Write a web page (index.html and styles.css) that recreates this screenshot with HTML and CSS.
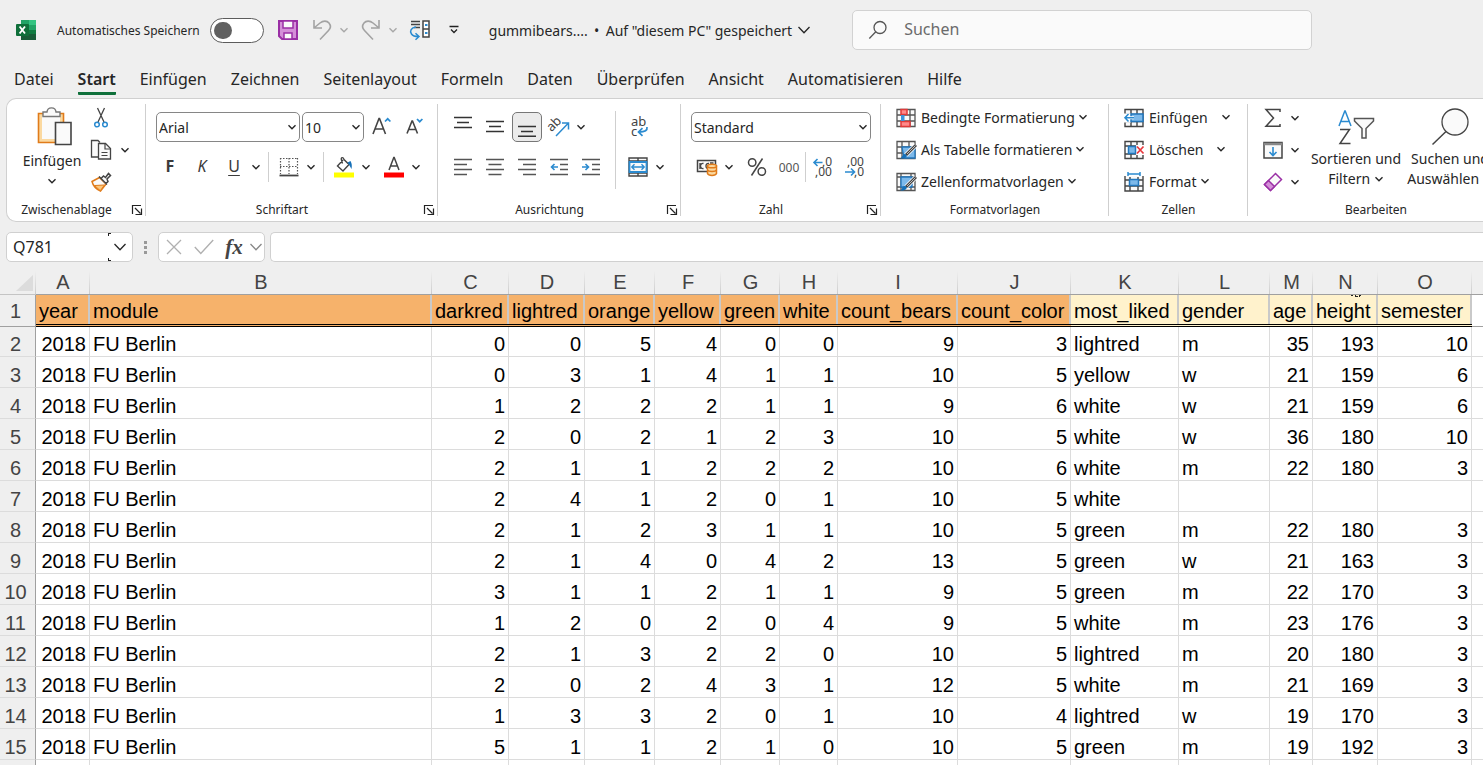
FILE: index.html
```html
<!DOCTYPE html>
<html lang="de">
<head>
<meta charset="utf-8">
<title>gummibears - Excel</title>
<link rel="stylesheet" href="styles.css">
</head>
<body>
<svg class="defs" aria-hidden="true">
  <symbol id="chev" viewBox="0 0 10 10"><path d="M1.500 3.200 5 6.700 8.500 3.200" fill="none" stroke="currentColor" stroke-width="1.400"/></symbol>
  <symbol id="chev-big" viewBox="0 0 14 14"><path d="M1.500 4 7 9.800 12.500 4" fill="none" stroke="currentColor" stroke-width="1.300"/></symbol>
  <symbol id="launcher" viewBox="0 0 12 12"><path d="M1.500 10V1.500H10M4 4l5.500 5.500M10.500 4.500v6h-6" fill="none" stroke="#222" stroke-width="1.200"/></symbol>
</svg>

<header class="titlebar">
  <svg class="logo" width="20" height="20" viewBox="0 0 20 20"><path d="M5 0h15v20H5z" fill="#21a366"/><path d="M13 0h7v5h-7z" fill="#33c481"/><path d="M5 5h8v5H5z" fill="#107c41"/><path d="M13 10h7v5h-7z" fill="#107c41"/><path d="M5 14h15v6H5z" fill="#185c37"/><rect y="4" width="13" height="12" rx="1" fill="#0f6f3a"/><path d="m3.600 6.500 5.400 7M9 6.500l-5.400 7" stroke="#fff" stroke-width="1.900"/></svg>
  <label class="autosave" for="autosave">Automatisches Speichern</label>
  <input type="checkbox" class="toggle" id="autosave">
  <div class="quick">
    <button class="q-save" aria-label="Speichern"><svg width="20" height="20" viewBox="0 0 20 20"><path d="M1 1h18v18H4l-3-3z" fill="#d48fd8" stroke="#9a2fa5" stroke-width="2"/><path d="M5 1h10v7H5z" fill="#fafafa" stroke="#9a2fa5" stroke-width="1.500"/><path d="M6 19v-6h8v6z" fill="#fafafa" stroke="#9a2fa5" stroke-width="1.500"/></svg></button>
    <button class="q-undo" aria-label="Rückgängig"><svg width="20" height="22" viewBox="0 0 20 22"><path d="M2 1v8h8M2 9l6-5c3-2.500 7-2.500 9 0 2 2.500 1.500 5.500-.5 7.500L8 20.500" fill="none" stroke="#a3a3a3" stroke-width="1.600"/></svg></button>
    <button class="q-chev" aria-label="Rückgängig-Liste"><svg width="10" height="10"><use href="#chev"/></svg></button>
    <button class="q-undo" aria-label="Wiederholen"><svg width="20" height="22" viewBox="0 0 20 22"><path d="M18 1v8h-8M18 9l-6-5C9 1.500 5 1.500 3 4c-2 2.500-1.500 5.500.5 7.500l8.500 9" fill="none" stroke="#a3a3a3" stroke-width="1.600"/></svg></button>
    <button class="q-chev" aria-label="Wiederholen-Liste"><svg width="10" height="10"><use href="#chev"/></svg></button>
    <button class="q-touch" aria-label="Sortieren"><svg width="22" height="20" viewBox="0 0 22 20"><path d="M2 1.500h9M2 4.500h9M5 7.500h6" stroke="#444" stroke-width="1.400"/><path d="M7 7C2 7.500.5 11 2.500 14c1.200 1.800 3.500 2.500 7 2.500M6.500 13.200l3.500 3.300-3.500 3.200" fill="none" stroke="#2b8bd0" stroke-width="1.500"/><path d="M14 1h6v16h-6zM14 9h6" fill="#fff" stroke="#444" stroke-width="1.500"/><path d="M16 5h2.500M16 13h2.500" stroke="#2b8bd0" stroke-width="1.800"/></svg></button>
    <button class="q-more" aria-label="Symbolleiste anpassen"><svg width="10" height="10" viewBox="0 0 10 10"><path d="M.5 1.500h9M2 4.500l3 3 3-3" fill="none" stroke="#222" stroke-width="1.300"/></svg></button>
  </div>
  <button class="doc-name"><span>gummibears....</span><span class="dot">•</span><span>Auf "diesem PC" gespeichert</span><svg width="14" height="14"><use href="#chev-big"/></svg></button>
  <div class="search">
    <svg width="20" height="20" viewBox="0 0 20 20"><circle cx="12" cy="7.500" r="6" fill="none" stroke="#555" stroke-width="1.300"/><path d="m7.800 11.800-6.500 6.700" stroke="#555" stroke-width="1.300"/></svg>
    <input type="text" placeholder="Suchen" aria-label="Suchen">
  </div>
</header>

<nav class="tabs">
  <a href="#">Datei</a><a href="#" class="active">Start</a><a href="#">Einfügen</a><a href="#">Zeichnen</a><a href="#">Seitenlayout</a><a href="#">Formeln</a><a href="#">Daten</a><a href="#">Überprüfen</a><a href="#">Ansicht</a><a href="#">Automatisieren</a><a href="#">Hilfe</a>
</nav>

<section class="ribbon">
  <div class="group g-clip">
    <div class="body">
      <button class="big paste"><svg width="42" height="40" viewBox="-6 0 42 40"><path d="M1.500 6.500h25v29h-25z" fill="#fbd9a0" stroke="#e07b1a" stroke-width="1.600"/><path d="M5 9h18v23H5z" fill="#fafafa"/><path d="M6 9.500V5h4c.5-5.500 8.500-5.500 9 0h4v4.500z" fill="#fafafa" stroke="#777" stroke-width="1.400"/><path d="M18.500 15.500h15.500v22H18.500z" fill="#fafafa" stroke="#444" stroke-width="1.600"/></svg><span>Einfügen</span><svg width="10" height="10"><use href="#chev"/></svg></button>
      <div class="stack">
        <div class="line"><button class="ic" aria-label="Ausschneiden"><svg width="16" height="22" viewBox="0 0 16 22"><path d="m4.500 1 6.500 14M11.500 1 5 15" stroke="#444" stroke-width="1.300"/><circle cx="4" cy="17.500" r="2.300" fill="none" stroke="#2b8bd0" stroke-width="1.500"/><circle cx="12" cy="17.500" r="2.300" fill="none" stroke="#2b8bd0" stroke-width="1.500"/></svg></button></div>
        <div class="line"><button class="ic" aria-label="Kopieren"><svg width="22" height="22" viewBox="0 0 22 22"><path d="M8 18H1.500V1.500H8l2 2" fill="#fafafa" stroke="#444" stroke-width="1.300"/><path d="M8.500 4.500h7l5 5v10.500h-12z" fill="#fafafa" stroke="#444" stroke-width="1.300"/><path d="M15 4.500V10h5.500M11.500 13.500h6M11.500 16.500h6" fill="none" stroke="#444" stroke-width="1.200"/></svg></button><button class="ch" aria-label="Kopieroptionen"><svg width="10" height="10"><use href="#chev"/></svg></button></div>
        <div class="line"><button class="ic" aria-label="Format übertragen"><svg width="20" height="20" viewBox="0 0 20 20"><path d="M1 9.500 8.500 5.500l6.500 6.500-5.500 7C5 17 2 13.500 1 9.500z" fill="#fafafa" stroke="#e07b1a" stroke-width="1.500"/><path d="m3.500 13.500 10-.5-4.200 5.700z" fill="#fbc77c" stroke="#e07b1a"/><path d="m8 4.500 8 8M10 6.500l2.500-2.500 2 1.500 3-4 2 2-3.500 3.500 1 2.500-2.500 2.500" fill="#fafafa" stroke="#444" stroke-width="1.500"/></svg></button></div>
      </div>
    </div>
    <div class="foot"><span>Zwischenablage</span><button class="launch" aria-label="Zwischenablage öffnen"><svg width="12" height="12"><use href="#launcher"/></svg></button></div>
  </div>

  <div class="group g-font">
    <div class="body rows">
      <div class="row">
        <div class="combo w-name"><select aria-label="Schriftart"><option>Arial</option></select><svg width="10" height="10"><use href="#chev"/></svg></div>
        <div class="combo w-size"><select aria-label="Schriftgrad"><option>10</option></select><svg width="10" height="10"><use href="#chev"/></svg></div>
        <button class="ic" aria-label="Schriftgrad vergrößern"><svg width="20" height="20" viewBox="0 0 20 20"><path d="M1 17 7 1.500h.5L13.500 17M3.200 12h8" fill="none" stroke="#444" stroke-width="1.600"/><path d="m13 4.500 2.700-2.700 2.700 2.700" fill="none" stroke="#2b8bd0" stroke-width="1.700"/></svg></button>
        <button class="ic" aria-label="Schriftgrad verkleinern"><svg width="20" height="20" viewBox="0 0 20 20"><path d="M3 16.500 8 4h.5l5 12.500M5 12.500h6.500" fill="none" stroke="#444" stroke-width="1.600"/><path d="m13 2 2.700 2.700L18.400 2" fill="none" stroke="#2b8bd0" stroke-width="1.700"/></svg></button>
      </div>
      <div class="row tools">
        <button class="ic bold">F</button><button class="ic italic">K</button><button class="ic under">U</button><button class="ch" aria-label="Unterstreichung"><svg width="10" height="10"><use href="#chev"/></svg></button>
        <i class="vr"></i>
        <button class="ic" aria-label="Rahmen"><svg width="20" height="20" viewBox="0 0 20 20"><path d="M1.500 1v16M18.500 1v16M10 1v16M1 1.500h18M1 9.500h18" fill="none" stroke="#555" stroke-width="1.200" stroke-dasharray="1.500 1.500"/><path d="M.5 18.500h19" stroke="#444" stroke-width="1.800"/></svg></button><button class="ch" aria-label="Rahmenoptionen"><svg width="10" height="10"><use href="#chev"/></svg></button>
        <i class="vr"></i>
        <button class="ic" aria-label="Füllfarbe"><svg width="20" height="22" viewBox="0 0 20 22"><path d="m9 4-5.500 6 5.500 5 6-6.500L10 3.500c-1-3-3.500-2-2.500.5l1 3.500" fill="none" stroke="#444" stroke-width="1.400"/><path d="m13.500 6.500 3-1.500c1.500 2.500 1.500 5 1 8-1-1.500-1.500-3-4-6.500z" fill="#1570b8"/><path d="M0 16.500h20v5H0z" fill="#ff0"/></svg></button><button class="ch" aria-label="Füllfarben"><svg width="10" height="10"><use href="#chev"/></svg></button>
        <button class="ic" aria-label="Schriftfarbe"><svg width="20" height="22" viewBox="0 0 20 22"><path d="m5 14 4.800-12.500h.4L15 14M6.800 10h6.500" fill="none" stroke="#444" stroke-width="1.500"/><path d="M0 16.500h20v5H0z" fill="#f00"/></svg></button><button class="ch" aria-label="Schriftfarben"><svg width="10" height="10"><use href="#chev"/></svg></button>
      </div>
    </div>
    <div class="foot"><span>Schriftart</span><button class="launch" aria-label="Schriftart öffnen"><svg width="12" height="12"><use href="#launcher"/></svg></button></div>
  </div>

  <div class="group g-align">
    <div class="body">
      <div class="rows">
        <div class="row">
          <button class="ic" aria-label="Oben"><svg width="18" height="20" viewBox="0 0 18 20"><path d="M0 .5h18M3 5.500h12M0 10.500h18" stroke="#333" stroke-width="1.400"/></svg></button>
          <button class="ic" aria-label="Mitte"><svg width="18" height="20" viewBox="0 0 18 20"><path d="M0 4.500h18M3 9.500h12M0 14.500h18" stroke="#333" stroke-width="1.400"/></svg></button>
          <button class="ic on" aria-label="Unten"><svg width="18" height="20" viewBox="0 0 18 20"><path d="M0 9.500h18M3 14.500h12M0 19.300h18" stroke="#333" stroke-width="1.400"/></svg></button>
          <button class="ic" aria-label="Ausrichtung"><svg width="22" height="20" viewBox="0 0 22 20"><g transform="rotate(-45 7 9)"><text x="0" y="11" class="ab">ab</text></g><path d="M8 19 20 6.500M14 6h6.500v6.500" fill="none" stroke="#2b8bd0" stroke-width="1.500"/></svg></button>
          <button class="ch" aria-label="Ausrichtungsoptionen"><svg width="10" height="10"><use href="#chev"/></svg></button>
        </div>
        <div class="row">
          <button class="ic" aria-label="Linksbündig"><svg width="18" height="18" viewBox="0 0 18 18"><path d="M0 1.500h18M0 6.500h13M0 11.500h18M0 16.500h13" stroke="#555" stroke-width="1.500"/></svg></button>
          <button class="ic" aria-label="Zentriert"><svg width="18" height="18" viewBox="0 0 18 18"><path d="M0 1.500h18M2.500 6.500h13M0 11.500h18M2.500 16.500h13" stroke="#555" stroke-width="1.500"/></svg></button>
          <button class="ic" aria-label="Rechtsbündig"><svg width="18" height="18" viewBox="0 0 18 18"><path d="M0 1.500h18M5 6.500h13M0 11.500h18M5 16.500h13" stroke="#555" stroke-width="1.500"/></svg></button>
          <button class="ic" aria-label="Einzug verkleinern"><svg width="18" height="18" viewBox="0 0 18 18"><path d="M0 1.500h18M10 6.500h8M10 11.500h8M0 16.500h18" stroke="#555" stroke-width="1.500"/><path d="M8 9H1.500M4.500 6l-3 3 3 3" fill="none" stroke="#2b8bd0" stroke-width="1.600"/></svg></button>
          <button class="ic" aria-label="Einzug vergrößern"><svg width="18" height="18" viewBox="0 0 18 18"><path d="M0 1.500h18M10 6.500h8M10 11.500h8M0 16.500h18" stroke="#555" stroke-width="1.500"/><path d="M0 9h6.500M3.500 6l3 3-3 3" fill="none" stroke="#2b8bd0" stroke-width="1.600"/></svg></button>
        </div>
      </div>
      <i class="vr tall"></i>
      <div class="rows">
        <div class="row"><button class="ic" aria-label="Textumbruch"><svg width="20" height="22" viewBox="0 0 20 22"><text x="3" y="10" class="ab">ab</text><text x="3" y="20" class="ab">c</text><path d="M19 11c.5 3.500-1.500 5-8.500 5M14.500 12.200 10.500 16l4 3.800" fill="none" stroke="#2b8bd0" stroke-width="1.700"/></svg></button></div>
        <div class="row"><button class="ic" aria-label="Verbinden und zentrieren"><svg width="20" height="20" viewBox="0 0 20 20"><path d="M1 1h18v18H1zM10 1v18M1 4h18M1 16h18" fill="#fafafa" stroke="#444" stroke-width="1.400"/><path d="M1.500 5h17v10h-17z" fill="#fafafa" stroke="#2b8bd0" stroke-width="1.800"/><path d="M4 10h12M6.500 7.200 3.800 10l2.700 2.800M13.500 7.200l2.700 2.800-2.700 2.800" fill="none" stroke="#2b8bd0" stroke-width="1.400"/></svg></button><button class="ch" aria-label="Verbindungsoptionen"><svg width="10" height="10"><use href="#chev"/></svg></button></div>
      </div>
    </div>
    <div class="foot"><span>Ausrichtung</span><button class="launch" aria-label="Ausrichtung öffnen"><svg width="12" height="12"><use href="#launcher"/></svg></button></div>
  </div>

  <div class="group g-num">
    <div class="body rows">
      <div class="row"><div class="combo w-fmt"><select aria-label="Zahlenformat"><option>Standard</option></select><svg width="10" height="10"><use href="#chev"/></svg></div></div>
      <div class="row">
        <button class="ic" aria-label="Buchhaltungsformat"><svg width="22" height="18" viewBox="0 0 22 18"><path d="M1.500 2.500h18v11h-18z" fill="#fafafa" stroke="#444" stroke-width="1.500"/><path d="M7.500 5.500c-4-1-4 6 0 5M13 5.500c-4-1-4 6 0 5M14 5h3.500M4 5v6" fill="none" stroke="#444" stroke-width="1.400"/><path d="M11.500 8v7.500c1 2.500 8 2.500 9 0V8z" fill="#fbd9a0" stroke="#e07b1a" stroke-width="1.500"/><ellipse cx="16" cy="8" rx="4.500" ry="1.800" fill="#fbd9a0" stroke="#e07b1a" stroke-width="1.500"/><path d="M11.500 12c1 2 8 2 9 0" fill="none" stroke="#e07b1a" stroke-width="1.500"/></svg></button><button class="ch" aria-label="Währungen"><svg width="10" height="10"><use href="#chev"/></svg></button>
        <button class="ic pct" aria-label="Prozent"><svg width="20" height="20" viewBox="0 0 20 20"><g fill="none" stroke="#444" stroke-width="1.500"><circle cx="5.200" cy="5.500" r="3.700"/><circle cx="14.800" cy="14.500" r="3.700"/><path d="M15.500 1.500 4.500 18.500"/></g></svg></button>
        <button class="ic thousand">000</button>
        <i class="vr"></i>
        <button class="ic" aria-label="Dezimalstelle hinzufügen"><svg width="20" height="22" viewBox="0 0 20 22"><text x="9" y="10" class="dec">,0</text><text x="2" y="20" class="dec">,00</text><path d="M9.500 6.500H1M4.500 3 1 6.500 4.500 10" fill="none" stroke="#2b8bd0" stroke-width="1.600"/></svg></button>
        <button class="ic" aria-label="Dezimalstelle entfernen"><svg width="20" height="22" viewBox="0 0 20 22"><text x="2" y="10" class="dec">,00</text><text x="9" y="20" class="dec">,0</text><path d="M0 16h9.500M6 12.500 9.500 16 6 19.500" fill="none" stroke="#2b8bd0" stroke-width="1.600"/></svg></button>
      </div>
    </div>
    <div class="foot"><span>Zahl</span><button class="launch" aria-label="Zahl öffnen"><svg width="12" height="12"><use href="#launcher"/></svg></button></div>
  </div>

  <div class="group g-styles">
    <div class="body list">
      <button class="item"><svg width="20" height="20" viewBox="0 0 20 20"><path d="M1 1.500h18v17H1zM6 1.500v17M14 1.500v17M1 7h18M1 13h18" fill="#fafafa" stroke="#555" stroke-width="1.300"/><path d="M5 1.500h6v5H5zM5 13.500h9v5H5z" fill="#ff8a8a" stroke="#e03a3a" stroke-width="1.500"/><path d="M5 7h3.500v6H5z" fill="#3b95dc"/></svg><span>Bedingte Formatierung</span><svg width="10" height="10"><use href="#chev"/></svg></button>
      <button class="item"><svg width="20" height="20" viewBox="0 0 20 20"><path d="M1 1.500h18v17H1zM6 1.500v17M13 1.500v17M1 7h18M1 13h18" fill="#fafafa" stroke="#555" stroke-width="1.300"/><path d="M6 7h13v11H8z" fill="#7db9ea" stroke="#2277bd" stroke-width="1.300"/><path d="M20 5 10 15" stroke="#fff" stroke-width="4.500"/><path d="M20 5 10 15" stroke="#444" stroke-width="2.800"/><path d="M19.500 5.500 11 14" stroke="#ddd" stroke-width=".8"/><path d="M4 18.500c2 0 2-4.500 5-4.500 3.500 1.500 1.500 5-5 4.500z" fill="#1570b8"/></svg><span>Als Tabelle formatieren</span><svg width="10" height="10"><use href="#chev"/></svg></button>
      <button class="item"><svg width="20" height="20" viewBox="0 0 20 20"><path d="M1 1.500h18v17H1zM5 1.500v17M15 1.500v17M1 5h18M1 15h18" fill="#fafafa" stroke="#555" stroke-width="1.300"/><path d="M5 5h11v10H5z" fill="#7db9ea" stroke="#2277bd" stroke-width="1.300"/><path d="M20 5 10 15" stroke="#fff" stroke-width="4.500"/><path d="M20 5 10 15" stroke="#444" stroke-width="2.800"/><path d="M19.500 5.500 11 14" stroke="#ddd" stroke-width=".8"/><path d="M4 18.500c2 0 2-4.500 5-4.500 3.500 1.500 1.500 5-5 4.500z" fill="#1570b8"/></svg><span>Zellenformatvorlagen</span><svg width="10" height="10"><use href="#chev"/></svg></button>
    </div>
    <div class="foot"><span>Formatvorlagen</span></div>
  </div>

  <div class="group g-cells">
    <div class="body list">
      <button class="item"><svg width="20" height="20" viewBox="0 0 20 20"><path d="M1 1.500h18v17H1zM7 1.500v17M13 1.500v17M1 6.500h18M1 13.500h18" fill="#fafafa" stroke="#444" stroke-width="1.400"/><path d="M0 5.500h7v9H0z" fill="#fff"/><path d="M7 6h12v7.500H7z" fill="#7db9ea" stroke="#2277bd" stroke-width="1.500"/><path d="M10 9.800H1M4.500 6 1 9.800l3.500 3.700" fill="none" stroke="#fff" stroke-width="3"/><path d="M10 9.800H1M4.500 6 1 9.800l3.500 3.700" fill="none" stroke="#2b8bd0" stroke-width="1.600"/></svg><span class="w-cmd">Einfügen</span><svg width="10" height="10"><use href="#chev"/></svg></button>
      <button class="item"><svg width="20" height="20" viewBox="0 0 20 20"><path d="M1 1.500h18V6H1zM1 14h18v4.500H1zM7 1v5M13 1v5M7 14v5M13 14v5M1 6v8" fill="#fafafa" stroke="#444" stroke-width="1.400"/><path d="M12 5h8v10h-8z" fill="#fff"/><path d="M4.500 6.500h7v7h-7z" fill="#7db9ea" stroke="#2277bd" stroke-width="1.500"/><path d="m13 6.500 6.500 7M19.500 6.500l-6.500 7" stroke="#e8383d" stroke-width="1.700"/></svg><span class="w-del">Löschen</span><svg width="10" height="10"><use href="#chev"/></svg></button>
      <button class="item"><svg width="20" height="20" viewBox="0 0 20 20"><path d="M1 4v15h18V4M6 5v14M14 5v14M1 8h18M1 14h18" fill="#fafafa" stroke="#444" stroke-width="1.400"/><path d="M5.500 7.500h9v6h-9z" fill="#7db9ea" stroke="#2277bd" stroke-width="1.500"/><path d="M4 0v4M16 0v4M4 2h12" stroke="#2b8bd0" stroke-width="1.500"/></svg><span>Format</span><svg width="10" height="10"><use href="#chev"/></svg></button>
    </div>
    <div class="foot"><span>Zellen</span></div>
  </div>

  <div class="group g-edit">
    <div class="body">
      <div class="stack">
        <div class="line"><button class="ic" aria-label="AutoSumme"><svg width="18" height="20" viewBox="0 0 18 20"><path d="M16 4V1.500H2L9.500 10 2 18.300h14V16" fill="none" stroke="#444" stroke-width="1.500"/></svg></button><button class="ch" aria-label="Summenoptionen"><svg width="10" height="10"><use href="#chev"/></svg></button></div>
        <div class="line"><button class="ic" aria-label="Ausfüllen"><svg width="20" height="18" viewBox="0 0 20 18"><path d="M1 1.500h18v15.500H1z" fill="#fafafa" stroke="#444" stroke-width="1.500"/><path d="M1 3h18" stroke="#888" stroke-width="2.500"/><path d="M10 6v8.500M6.500 11l3.500 3.500 3.500-3.500" fill="none" stroke="#2b8bd0" stroke-width="1.600"/></svg></button><button class="ch" aria-label="Ausfülloptionen"><svg width="10" height="10"><use href="#chev"/></svg></button></div>
        <div class="line"><button class="ic" aria-label="Löschen"><svg width="20" height="20" viewBox="0 0 20 20"><path d="m1.500 12.500 11-11 6 6-11 11z" fill="#fafafa" stroke="#9a2fa5" stroke-width="1.500"/><path d="M1.500 12.500 5.500 8.500l6 6-4 4z" fill="#d48fd8" stroke="#9a2fa5" stroke-width="1.500"/></svg></button><button class="ch" aria-label="Löschoptionen"><svg width="10" height="10"><use href="#chev"/></svg></button></div>
      </div>
      <button class="big sort"><svg width="38" height="36" viewBox="0 0 38 36"><path d="M2 16 7.800 1h.4L14 16M4.200 11.500h7.600" fill="none" stroke="#2b8bd0" stroke-width="1.500"/><path d="M3 19.500h9.500L3 33.500h10.500" fill="none" stroke="#444" stroke-width="1.500"/><path d="M17.500 8.500h19v2.500l-7.500 7.500v9.500h-4V18.500l-7.500-7.500z" fill="#fafafa" stroke="#555" stroke-width="1.500"/></svg><span>Sortieren und</span><span>Filtern <svg width="10" height="10"><use href="#chev"/></svg></span></button>
      <button class="big find"><svg width="38" height="38" viewBox="0 0 38 38"><circle cx="24" cy="14" r="13" fill="#fafafa" stroke="#444" stroke-width="1.300"/><path d="M15 23.500 1.500 36.500" stroke="#444" stroke-width="1.500"/></svg><span>Suchen und</span><span>Auswählen <svg width="10" height="10"><use href="#chev"/></svg></span></button>
    </div>
    <div class="foot"><span>Bearbeiten</span></div>
  </div>
</section>

<div class="formula">
  <div class="name-box"><input type="text" value="Q781" aria-label="Namenfeld"><button aria-label="Namen"><svg width="14" height="14"><use href="#chev-big"/></svg></button></div>
  <div class="grip"><i></i><i></i><i></i></div>
  <div class="fx-box">
    <button aria-label="Abbrechen"><svg width="18" height="18" viewBox="0 0 18 18"><path d="m2 2 14 14M16 2 2 16" stroke="#b0b0b0" stroke-width="1.300"/></svg></button>
    <button aria-label="Eingeben"><svg width="20" height="18" viewBox="0 0 20 18"><path d="m.8 9 6 6.500L19.200 2" fill="none" stroke="#b0b0b0" stroke-width="1.400"/></svg></button>
    <button class="fx">fx</button>
    <button class="fx-chev" aria-label="Funktionen"><svg width="14" height="14"><use href="#chev-big"/></svg></button>
  </div>
  <input type="text" class="formula-input" aria-label="Bearbeitungsleiste">
</div>

<main class="sheet">
<table>
<colgroup><col class="c-row"><col class="c-a"><col class="c-b"><col class="c-c"><col class="c-d"><col class="c-e"><col class="c-f"><col class="c-g"><col class="c-h"><col class="c-i"><col class="c-j"><col class="c-k"><col class="c-l"><col class="c-m"><col class="c-n"><col class="c-o"><col></colgroup>
<thead><tr><th class="corner"><svg width="18" height="16" viewBox="0 0 18 16"><path d="M18 0v16H1z" fill="#dcdcdc"/></svg></th><th>A</th><th>B</th><th>C</th><th>D</th><th>E</th><th>F</th><th>G</th><th>H</th><th>I</th><th>J</th><th>K</th><th>L</th><th>M</th><th>N</th><th>O</th><th></th></tr></thead>
<tbody>
<tr class="names"><th>1</th><td>year</td><td>module</td><td>darkred</td><td>lightred</td><td>orange</td><td>yellow</td><td>green</td><td>white</td><td>count_bears</td><td>count_color</td><td class="cream">most_liked</td><td class="cream">gender</td><td class="cream">age</td><td class="cream marked">height<svg class="mark" width="10" height="3" viewBox="0 0 10 3"><path d="M0 0h2v1H0zM4 0h1v2H4zM5 1h2v1H5zM8 0h2v1H9v1H8z" fill="#222"/></svg></td><td class="cream">semester</td><td class="blank"></td></tr>
<tr class="first"><th>2</th><td>2018</td><td>FU Berlin</td><td>0</td><td>0</td><td>5</td><td>4</td><td>0</td><td>0</td><td>9</td><td>3</td><td>lightred</td><td>m</td><td>35</td><td>193</td><td>10</td><td></td></tr>
<tr><th>3</th><td>2018</td><td>FU Berlin</td><td>0</td><td>3</td><td>1</td><td>4</td><td>1</td><td>1</td><td>10</td><td>5</td><td>yellow</td><td>w</td><td>21</td><td>159</td><td>6</td><td></td></tr>
<tr><th>4</th><td>2018</td><td>FU Berlin</td><td>1</td><td>2</td><td>2</td><td>2</td><td>1</td><td>1</td><td>9</td><td>6</td><td>white</td><td>w</td><td>21</td><td>159</td><td>6</td><td></td></tr>
<tr><th>5</th><td>2018</td><td>FU Berlin</td><td>2</td><td>0</td><td>2</td><td>1</td><td>2</td><td>3</td><td>10</td><td>5</td><td>white</td><td>w</td><td>36</td><td>180</td><td>10</td><td></td></tr>
<tr><th>6</th><td>2018</td><td>FU Berlin</td><td>2</td><td>1</td><td>1</td><td>2</td><td>2</td><td>2</td><td>10</td><td>6</td><td>white</td><td>m</td><td>22</td><td>180</td><td>3</td><td></td></tr>
<tr><th>7</th><td>2018</td><td>FU Berlin</td><td>2</td><td>4</td><td>1</td><td>2</td><td>0</td><td>1</td><td>10</td><td>5</td><td>white</td><td></td><td></td><td></td><td></td><td></td></tr>
<tr><th>8</th><td>2018</td><td>FU Berlin</td><td>2</td><td>1</td><td>2</td><td>3</td><td>1</td><td>1</td><td>10</td><td>5</td><td>green</td><td>m</td><td>22</td><td>180</td><td>3</td><td></td></tr>
<tr><th>9</th><td>2018</td><td>FU Berlin</td><td>2</td><td>1</td><td>4</td><td>0</td><td>4</td><td>2</td><td>13</td><td>5</td><td>green</td><td>w</td><td>21</td><td>163</td><td>3</td><td></td></tr>
<tr><th>10</th><td>2018</td><td>FU Berlin</td><td>3</td><td>1</td><td>1</td><td>2</td><td>1</td><td>1</td><td>9</td><td>5</td><td>green</td><td>m</td><td>22</td><td>170</td><td>3</td><td></td></tr>
<tr><th>11</th><td>2018</td><td>FU Berlin</td><td>1</td><td>2</td><td>0</td><td>2</td><td>0</td><td>4</td><td>9</td><td>5</td><td>white</td><td>m</td><td>23</td><td>176</td><td>3</td><td></td></tr>
<tr><th>12</th><td>2018</td><td>FU Berlin</td><td>2</td><td>1</td><td>3</td><td>2</td><td>2</td><td>0</td><td>10</td><td>5</td><td>lightred</td><td>m</td><td>20</td><td>180</td><td>3</td><td></td></tr>
<tr><th>13</th><td>2018</td><td>FU Berlin</td><td>2</td><td>0</td><td>2</td><td>4</td><td>3</td><td>1</td><td>12</td><td>5</td><td>white</td><td>m</td><td>21</td><td>169</td><td>3</td><td></td></tr>
<tr><th>14</th><td>2018</td><td>FU Berlin</td><td>1</td><td>3</td><td>3</td><td>2</td><td>0</td><td>1</td><td>10</td><td>4</td><td>lightred</td><td>w</td><td>19</td><td>170</td><td>3</td><td></td></tr>
<tr><th>15</th><td>2018</td><td>FU Berlin</td><td>5</td><td>1</td><td>1</td><td>2</td><td>1</td><td>0</td><td>10</td><td>5</td><td>green</td><td>m</td><td>19</td><td>192</td><td>3</td><td></td></tr>
<tr><th></th><td></td><td></td><td></td><td></td><td></td><td></td><td></td><td></td><td></td><td></td><td></td><td></td><td></td><td></td><td></td><td></td></tr>
</tbody>
</table>
</main>
</body>
</html>
```
FILE: styles.css
```css
* { box-sizing: border-box; }

body {
  margin: 0;
  height: 100vh;
  display: flex;
  flex-direction: column;
  overflow: hidden;
  background: #efefef;
  color: #262626;
  font-family: "Noto Sans", sans-serif;
  font-size: 14px;
}

.defs { display: none; }

button {
  margin: 0;
  padding: 0;
  border: 0;
  background: none;
  color: inherit;
  font: inherit;
}

svg { flex: none; overflow: visible; }

input, select { font: inherit; color: inherit; }

/* Title bar */
.titlebar {
  flex: none;
  display: flex;
  align-items: center;
  height: 60px;
  padding-left: 16px;
}
.autosave { margin-left: 21px; font-size: 12px; white-space: nowrap; }
.toggle {
  appearance: none;
  flex: none;
  width: 54px;
  height: 25px;
  margin: 0 0 0 10px;
  padding: 3px;
  border: 1px solid #5c5c5c;
  border-radius: 13px;
  background: #fff;
}
.toggle::before {
  content: "";
  display: block;
  width: 18px;
  height: 17px;
  border-radius: 9px;
  background: #616161;
}
.quick { display: flex; align-items: center; margin-left: 14px; }
.quick button { display: flex; justify-content: center; }
.q-save { width: 20px; }
.q-undo { width: 20px; margin-left: 14px; }
.q-chev { width: 14px; margin-left: 5px; color: #a8a8a8; }
.q-chev + .q-undo { margin-left: 10px; }
.q-touch { width: 22px; margin-left: 9px; }
.q-more { width: 20px; margin-left: 13px; }
.doc-name {
  display: flex;
  align-items: center;
  margin-left: 25px;
  white-space: nowrap;
}
.doc-name .dot { width: 18px; text-align: center; }
.doc-name svg { margin-left: 5px; }
.search {
  flex: 0 1 460px;
  display: flex;
  align-items: center;
  height: 40px;
  margin-left: 41px;
  padding-left: 15px;
  border: 1px solid #d2d2d2;
  border-radius: 5px;
  background: #fafafa;
}
.search input {
  flex: 1;
  min-width: 0;
  margin: 0 0 2px 16px;
  padding: 0;
  border: 0;
  background: none;
  font-size: 16px;
}
.search input::placeholder { color: #6b6b6b; opacity: 1; }

/* Tabs */
.tabs {
  flex: none;
  display: flex;
  gap: 24px;
  height: 38px;
  padding: 8px 0 0 14px;
}
.tabs a {
  height: 27px;
  color: #262626;
  font-size: 16px;
  line-height: 22px;
  text-decoration: none;
  white-space: nowrap;
}
.tabs .active {
  border-bottom: 3px solid #0f703b;
  border-radius: 1px;
  font-weight: 600;
}

/* Ribbon */
.ribbon {
  flex: none;
  display: flex;
  height: 124px;
  margin-left: 6px;
  padding-top: 3px;
  border: 1px solid #d0d0d0;
  border-right: 0;
  border-radius: 10px 0 0 10px;
  background: #fff;
}
.group {
  flex: none;
  display: flex;
  flex-direction: column;
  background: linear-gradient(#cfcfcf, #cfcfcf) right 2px / 1px 112px no-repeat;
}
.body { display: flex; height: 96px; }
.foot {
  display: flex;
  align-items: center;
  height: 23px;
  font-size: 12px;
}
.foot span { flex: 1; text-align: center; }
.launch { display: flex; width: 20px; padding-left: 5px; }
.body.rows, .g-align .rows {
  display: flex;
  flex-direction: column;
  gap: 10px;
  padding-top: 10px;
}
.row { display: flex; align-items: center; height: 30px; }
.ic {
  display: flex;
  align-items: center;
  justify-content: center;
  width: 32px;
  height: 30px;
}
.ch {
  display: flex;
  align-items: center;
  justify-content: center;
  width: 16px;
  height: 30px;
  margin-left: -2px;
}
.on { width: 30px; margin: 0 1px; border: 1px solid #777; border-radius: 5px; background: #ebebeb; }
.vr { flex: none; width: 1px; height: 30px; background: #cfcfcf; margin: 0 4px; }
.tall { height: 78px; margin: 9px 6px 0 8px; }
.stack { display: flex; flex-direction: column; }
.line { display: flex; align-items: center; height: 32px; }
.big {
  display: flex;
  flex-direction: column;
  align-items: center;
  line-height: 20px;
  white-space: nowrap;
}

.g-clip { width: 139px; }
.paste { width: 74px; margin-left: 8px; padding-top: 5px; }
.paste span { margin-top: 4px; }
.paste svg + span + svg { margin-top: 5px; }
.g-clip .ic { width: 24px; }
.g-clip .ch { width: 20px; margin-left: 2px; }

.g-font { width: 292px; }
.g-font .rows { padding-left: 8px; }
.g-font .w-name { margin-left: 2px; }
.g-num .rows { padding-left: 10px; }
.combo { position: relative; height: 30px; }
.combo select {
  appearance: none;
  width: 100%;
  height: 30px;
  padding: 0 2px;
  border: 1px solid #868686;
  border-radius: 5px;
  background: #fff;
}
.combo svg { position: absolute; right: 3px; top: 10px; }
.w-name { width: 144px; margin-right: 2px; }
.w-size { width: 62px; margin-right: 2px; }
.w-fmt { width: 180px; }
.bold, .italic, .under { padding-bottom: 2px; font-size: 16px; color: #3b3b3b; }
.bold { font-weight: 700; }
.italic { font-style: italic; }
.under { text-decoration: underline; text-underline-offset: 3px; }
.tools .ch + .ic { margin-left: 4px; }

.g-align { width: 243px; }
.g-align .body { padding-left: 9px; }
.ab { font-size: 13px; fill: #444; }

.g-num { width: 200px; }
.pct { margin-left: 4px; }
.thousand { font-size: 12px; color: #555; }
.g-num .vr { margin: 0 1px 0 0; }
.dec { font-size: 12px; fill: #444; }

.g-styles { width: 228px; }
.g-cells { width: 139px; }
.list { flex-direction: column; padding-left: 15px; }
.item {
  display: flex;
  align-items: center;
  height: 32px;
  white-space: nowrap;
}
.item span { margin: 0 3px 0 5px; padding-bottom: 2px; text-align: left; }
.item span + svg { margin-bottom: 2px; }
.item .w-cmd { width: 69px; }
.item .w-del { width: 64px; }

.g-edit { width: 256px; background: none; }
.g-edit .stack { padding-left: 9px; }
.sort { width: 94px; margin-left: 6px; padding-top: 8px; }
.find { width: 94px; padding-top: 6px; }
.sort svg + span, .find svg + span { margin-top: 3px; }

/* Formula bar */
.formula {
  flex: none;
  display: flex;
  height: 30px;
  margin: 10px 0 9px 6px;
}
.name-box, .fx-box {
  display: flex;
  align-items: center;
  border: 1px solid #d0d0d0;
  border-radius: 5px;
  background: #fff;
}
.name-box { width: 127px; }
.name-box input {
  width: 101px;
  height: 28px;
  padding: 0 0 1px 6px;
  border: 0;
  border-radius: 5px;
  background: none;
  font-size: 16px;
}
.name-box button {
  display: flex;
  align-items: center;
  justify-content: center;
  width: 24px;
  height: 28px;
  background:
    linear-gradient(#222, #222) left top / 3px 1px no-repeat,
    linear-gradient(#222, #222) left top / 1px 3px no-repeat,
    linear-gradient(#222, #222) left bottom / 3px 1px no-repeat,
    linear-gradient(#222, #222) left bottom / 1px 3px no-repeat;
}
.grip {
  display: flex;
  flex-direction: column;
  align-items: center;
  justify-content: center;
  gap: 2px;
  width: 25px;
}
.grip i { width: 3px; height: 3px; background: #999; }
.fx-box { width: 107px; }
.fx-box button { display: flex; justify-content: center; width: 30px; }
.fx-box .fx {
  font-family: "Liberation Serif", serif;
  font-size: 21px;
  font-style: italic;
  font-weight: 700;
  color: #444;
}
.fx-box .fx-chev { width: 14px; color: #888; }
.formula-input {
  flex: 1;
  min-width: 0;
  margin-left: 5px;
  border: 1px solid #d0d0d0;
  border-right: 0;
  border-radius: 5px 0 0 5px;
  background: #fff;
}

/* Sheet */
.sheet { flex: 1; min-height: 0; overflow: hidden; background: #fff; }
table {
  width: 100%;
  table-layout: fixed;
  border-collapse: separate;
  border-spacing: 0;
  font-family: "Liberation Sans", Arial, sans-serif;
  font-size: 20px;
  line-height: 23px;
  color: #000;
}
.c-row { width: 36px; } .c-a { width: 54px; } .c-b { width: 342px; }
.c-c { width: 77px; } .c-d { width: 76px; } .c-e { width: 70px; }
.c-f { width: 66px; } .c-g { width: 59px; } .c-h { width: 58px; }
.c-i { width: 120px; } .c-j { width: 113px; } .c-k { width: 108px; }
.c-l { width: 91px; } .c-m { width: 43px; } .c-n { width: 65px; }
.c-o { width: 94px; }
th, td {
  height: 31px;
  padding: 0 3px;
  border-right: 1px solid #dcdcdc;
  border-bottom: 1px solid #dcdcdc;
  vertical-align: bottom;
  text-align: right;
  white-space: nowrap;
}
td:last-child { border-right: 0; }
th {
  background: #efefef;
  color: #444;
  font-weight: 400;
  text-align: center;
}
thead th {
  height: 24px;
  padding: 0;
  border-right: 0;
  border-bottom-color: #a0a0a0;
  background: linear-gradient(#efefef, #cccccc) right / 1px 100% no-repeat #efefef;
}
thead th:last-child { background: #efefef; }
thead .corner { text-align: right; border-bottom-color: #c4c4c4; }
.corner svg { display: block; margin: 0 3px 3px auto; }
tbody th { padding: 0 4px 0 0; border-right-color: #a0a0a0; }
td:nth-child(3), td:nth-child(12), td:nth-child(13), .names td { text-align: left; }
.names th { border-bottom-color: #a0a0a0; }
.names th, .names td { height: 32px; }
.names td {
  padding-bottom: 1px;
  border-right: 0;
  border-bottom: 3px double #000;
  background: #f6b26b;
  box-shadow: inset -2px 0 #c9c9c9;
}
.names .cream { background: #fff2cc; }
.names .blank { border-bottom: 1px solid #a0a0a0; background: #fff; box-shadow: none; }
.names th { padding-bottom: 3px; }
.first th, .first td { height: 30px; }
.marked { position: relative; }
.mark { position: absolute; left: 38px; top: 0; }
```
